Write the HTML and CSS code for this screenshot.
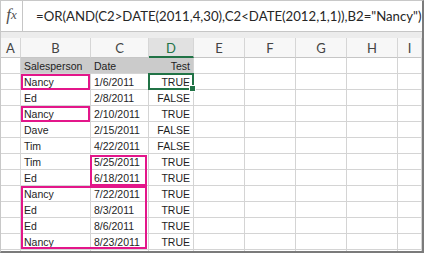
FILE: index.html
```html
<!DOCTYPE html>
<html>
<head>
<meta charset="utf-8">
<link rel="stylesheet" href="styles.css">
</head>
<body>
<div class="frame">
  <div class="fbar">
    <div class="fx">f<span class="x">x</span></div>
    <div class="formula">=OR(AND(C2&gt;DATE(2011,4,30),C2&lt;DATE(2012,1,1)),B2="Nancy")</div>
  </div>
  <div class="band"></div>
  <div class="sheet">
    <div class="h">A</div><div class="h">B</div><div class="h">C</div><div class="h sel">D</div><div class="h">E</div><div class="h">F</div><div class="h">G</div><div class="h">H</div><div class="h">I</div>

    <div class="c"></div><div class="c hd">Salesperson</div><div class="c hd">Date</div><div class="c hd r">Test</div><div class="c"></div><div class="c"></div><div class="c"></div><div class="c"></div><div class="c"></div>

    <div class="c"></div><div class="c">Nancy</div><div class="c">1/6/2011</div><div class="c r">TRUE</div><div class="c"></div><div class="c"></div><div class="c"></div><div class="c"></div><div class="c"></div>
    <div class="c"></div><div class="c">Ed</div><div class="c">2/8/2011</div><div class="c r">FALSE</div><div class="c"></div><div class="c"></div><div class="c"></div><div class="c"></div><div class="c"></div>
    <div class="c"></div><div class="c">Nancy</div><div class="c">2/10/2011</div><div class="c r">TRUE</div><div class="c"></div><div class="c"></div><div class="c"></div><div class="c"></div><div class="c"></div>
    <div class="c"></div><div class="c">Dave</div><div class="c">2/15/2011</div><div class="c r">FALSE</div><div class="c"></div><div class="c"></div><div class="c"></div><div class="c"></div><div class="c"></div>
    <div class="c"></div><div class="c">Tim</div><div class="c">4/22/2011</div><div class="c r">FALSE</div><div class="c"></div><div class="c"></div><div class="c"></div><div class="c"></div><div class="c"></div>
    <div class="c"></div><div class="c">Tim</div><div class="c">5/25/2011</div><div class="c r">TRUE</div><div class="c"></div><div class="c"></div><div class="c"></div><div class="c"></div><div class="c"></div>
    <div class="c"></div><div class="c">Ed</div><div class="c">6/18/2011</div><div class="c r">TRUE</div><div class="c"></div><div class="c"></div><div class="c"></div><div class="c"></div><div class="c"></div>
    <div class="c"></div><div class="c">Nancy</div><div class="c">7/22/2011</div><div class="c r">TRUE</div><div class="c"></div><div class="c"></div><div class="c"></div><div class="c"></div><div class="c"></div>
    <div class="c"></div><div class="c">Ed</div><div class="c">8/3/2011</div><div class="c r">TRUE</div><div class="c"></div><div class="c"></div><div class="c"></div><div class="c"></div><div class="c"></div>
    <div class="c"></div><div class="c">Ed</div><div class="c">8/6/2011</div><div class="c r">TRUE</div><div class="c"></div><div class="c"></div><div class="c"></div><div class="c"></div><div class="c"></div>
    <div class="c"></div><div class="c">Nancy</div><div class="c">8/23/2011</div><div class="c r">TRUE</div><div class="c"></div><div class="c"></div><div class="c"></div><div class="c"></div><div class="c"></div>
    <div class="c"></div><div class="c"></div><div class="c"></div><div class="c"></div><div class="c"></div><div class="c"></div><div class="c"></div><div class="c"></div><div class="c"></div>
  </div>
  <div class="pink p1"></div>
  <div class="pink p2"></div>
  <div class="pink p3"></div>
  <div class="pink p4"></div>
  <div class="active"><span class="handle"></span></div>
</div>
</body>
</html>
```
FILE: styles.css
```css
html, body {
  margin: 0;
  padding: 0;
  background: #ffffff;
}
body {
  width: 425px;
  height: 254px;
  overflow: hidden;
  font-family: "Liberation Sans", Arial, sans-serif;
}
.frame {
  position: relative;
  width: 421px;
  height: 250px;
  border-top: 1px solid #c8c8c8;
  border-left: 1px solid #c8c8c8;
  border-right: 2px solid #7b7b7b;
  border-bottom: 2px solid #7b7b7b;
  overflow: hidden;
  background: #ffffff;
}
.fbar {
  display: flex;
  height: 30px;
  border-bottom: 1px solid #c6c6c6;
  background: #ffffff;
}
.fx {
  width: 22px;
  border-right: 1px solid #c6c6c6;
  display: flex;
  align-items: center;
  justify-content: center;
  font-family: "Liberation Serif", serif;
  font-style: italic;
  font-size: 17px;
  color: #505050;
  padding-bottom: 2px;
  box-sizing: border-box;
}
.fx .x {
  font-size: 13px;
}
.formula {
  flex: 1;
  padding-left: 13px;
  font-family: Lato, "Liberation Sans", sans-serif;
  font-size: 13.2px;
  line-height: 30px;
  color: #262626;
  white-space: nowrap;
  overflow: hidden;
}
.band {
  height: 6px;
  background: #ececec;
}
.sheet {
  display: grid;
  grid-template-columns: 20px 70px 58px 45px 51px 51px 51px 51px 1fr;
  grid-template-rows: 20px repeat(13, 16px);
}
.h {
  box-sizing: border-box;
  border-right: 1px solid #d6d6d6;
  border-bottom: 1px solid #c6c6c6;
  background: #f7f7f7;
  color: #444444;
  font-family: Lato, "Liberation Sans", sans-serif;
  font-size: 13px;
  text-align: center;
  line-height: 21px;
}
.h.sel {
  background: #e1e1e1;
  color: #217346;
  border-bottom: 2px solid #217346;
}
.c {
  box-sizing: border-box;
  border-right: 1px solid #d4d4d4;
  border-bottom: 1px solid #d4d4d4;
  font-size: 10.5px;
  line-height: 16px;
  color: #1e1e1e;
  padding: 0 3px;
  white-space: nowrap;
  overflow: hidden;
}
.c.r {
  text-align: right;
}
.c.hd {
  background: #cbcbcb;
  border-right-color: #cbcbcb;
  border-bottom-color: #d4d4d4;
}
.c.hd.r {
  border-right-color: #d4d4d4;
}
.pink {
  position: absolute;
  box-sizing: border-box;
  border: 2px solid #e3168a;
}
.p1 { left: 20px; top: 73px; width: 69px; height: 16px; }
.p2 { left: 20px; top: 105px; width: 69px; height: 16px; }
.p3 { left: 89px; top: 154px; width: 57px; height: 31px; }
.p4 { left: 20px; top: 185px; width: 126px; height: 63px; }
.active {
  position: absolute;
  box-sizing: border-box;
  left: 147px;
  top: 72px;
  width: 46px;
  height: 17px;
  border: 2px solid #217346;
}
.handle {
  position: absolute;
  right: -4px;
  bottom: -4px;
  width: 5px;
  height: 5px;
  background: #217346;
  border: 1px solid #ffffff;
}
```
